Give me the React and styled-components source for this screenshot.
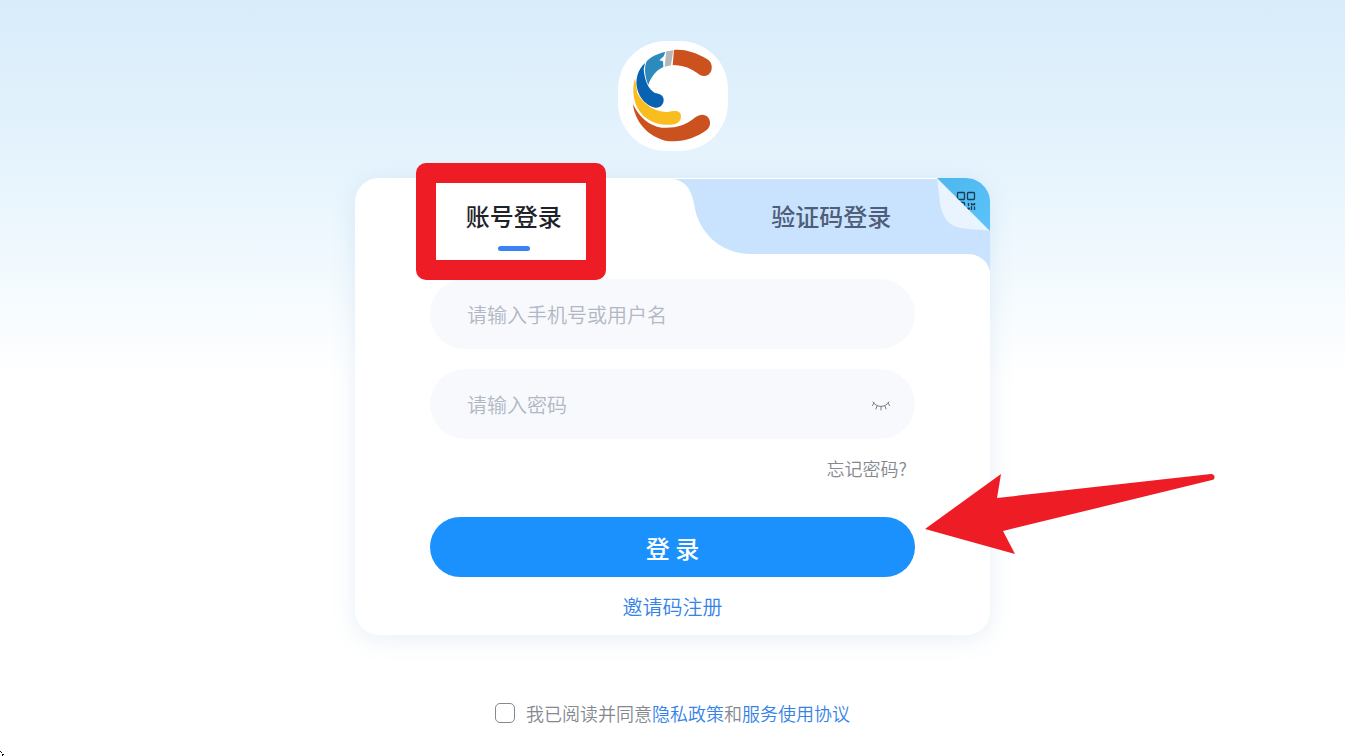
import React, { useState } from 'react';
import styled, { createGlobalStyle, ThemeProvider } from 'styled-components';

const theme = {
  font: "'Noto Sans CJK SC', 'Noto Sans', sans-serif",
  colors: {
    primary: '#1b91fd',
    link: '#3683e8',
    indicator: '#3b82f6',
    text: '#1f2329',
    tabIdle: '#4f5d78',
    muted: '#85898f',
    placeholder: '#b1b7c3',
    field: '#f7f9fd',
    tab: '#c9e3ff',
    mark: '#ee1c25',
  },
};

const GlobalStyle = createGlobalStyle`
  * {
    box-sizing: border-box;
  }

  body {
    margin: 0;
    background: #ffffff;
  }

  button,
  input {
    font-family: inherit;
  }
`;

const Page = styled.div`
  position: relative;
  min-height: 100vh;
  display: flex;
  flex-direction: column;
  align-items: center;
  padding: 41px 16px 28px;
  overflow: hidden;
  font-family: ${({ theme }) => theme.font};
  background: linear-gradient(180deg, #d8ecfa 0, #e6f4fd 170px, #ffffff 380px);
`;

const LogoBox = styled.div`
  width: 110px;
  height: 110px;
  margin-bottom: 27px;
  border-radius: 48px;
  background: #ffffff;

  svg {
    display: block;
  }
`;

const Card = styled.main`
  width: 100%;
  max-width: 635px;
  border-radius: 24px;
  background: #ffffff;
  box-shadow: 0 4px 24px rgba(60, 130, 190, 0.12);
`;

const Tabs = styled.div`
  display: flex;
  height: 76px;
`;

const TabSlot = styled.div`
  position: relative;
  flex: 1;
`;

const Tab = styled.button`
  position: relative;
  display: flex;
  flex-direction: column;
  align-items: center;
  width: 100%;
  height: 100%;
  padding: 20px 0 0;
  border: 0;
  background: none;
  font-size: 24px;
  line-height: 36px;
  font-weight: 500;
  color: ${({ theme, $active }) => ($active ? theme.colors.text : theme.colors.tabIdle)};
  cursor: pointer;

  &::after {
    content: '';
    width: 32px;
    height: 5px;
    margin-top: 12px;
    border-radius: 3px;
    background: ${({ theme, $active }) => ($active ? theme.colors.indicator : 'transparent')};
  }
`;

const TabShape = styled.svg`
  position: absolute;
  top: 0;
  right: 0;
  width: 100%;
  height: 98px;
`;

const QrButton = styled.button`
  position: absolute;
  top: 0;
  right: 0;
  width: 54px;
  height: 54px;
  padding: 0;
  border: 0;
  background: none;
  cursor: pointer;

  svg {
    display: block;
  }
`;

const Highlight = styled.div`
  position: absolute;
  z-index: 2;
  top: -15px;
  left: calc(50% - 98px);
  width: 190px;
  height: 117px;
  border: 20px solid ${({ theme }) => theme.colors.mark};
  border-radius: 10px;
  pointer-events: none;
`;

const Form = styled.form`
  display: flex;
  flex-direction: column;
  padding: 25px 75px 13px;
`;

const Field = styled.div`
  display: flex;
  align-items: center;
  height: 70px;
  margin-bottom: ${({ $last }) => ($last ? '16px' : '20px')};
  padding: 0 24px 0 37px;
  border-radius: 35px;
  background: ${({ theme }) => theme.colors.field};
`;

const Input = styled.input`
  flex: 1;
  min-width: 0;
  height: 40px;
  padding: 0;
  border: 0;
  outline: 0;
  background: transparent;
  font-size: 20px;
  color: ${({ theme }) => theme.colors.text};

  &::placeholder {
    color: ${({ theme }) => theme.colors.placeholder};
    font-weight: 350;
    opacity: 1;
  }
`;

const EyeButton = styled.button`
  display: flex;
  padding: 4px 0 0;
  border: 0;
  background: none;
  cursor: pointer;
`;

const ForgotLink = styled.a`
  align-self: flex-end;
  margin: 0 8px 36px 0;
  font-size: 18px;
  line-height: 26px;
  font-weight: 350;
  color: ${({ theme }) => theme.colors.muted};
  text-decoration: none;
`;

const SubmitRow = styled.div`
  position: relative;
  margin-bottom: 15px;
`;

const SubmitButton = styled.button`
  display: block;
  width: 100%;
  height: 60px;
  padding: 0;
  border: 0;
  border-radius: 30px;
  background: ${({ theme }) => theme.colors.primary};
  color: #ffffff;
  font-size: 24px;
  font-weight: 500;
  cursor: pointer;
`;

const Arrow = styled.svg`
  position: absolute;
  top: -44px;
  left: calc(100% + 10px);
  width: 290px;
  height: 81px;
  pointer-events: none;
`;

const RegisterLink = styled.a`
  align-self: center;
  font-size: 20px;
  line-height: 30px;
  font-weight: 350;
  color: ${({ theme }) => theme.colors.link};
  text-decoration: none;
`;

const Agreement = styled.div`
  display: flex;
  align-items: center;
  gap: 11px;
  margin-top: 65px;
  font-size: 18px;
  line-height: 26px;
  font-weight: 350;
  color: ${({ theme }) => theme.colors.muted};

  a {
    color: ${({ theme }) => theme.colors.link};
    text-decoration: none;
  }
`;

const Checkbox = styled.input`
  appearance: none;
  width: 20px;
  height: 20px;
  margin: 0;
  border: 1px solid #85888e;
  border-radius: 5px;
  background: #ffffff;
  cursor: pointer;

  &:checked {
    border-color: ${({ theme }) => theme.colors.primary};
    background: ${({ theme }) => theme.colors.primary};
  }
`;

const CornerMark = styled.svg`
  position: absolute;
  left: 0;
  bottom: 0;
`;

const Logo = () => (
  <svg width='110' height='110' viewBox='54 33 330 330' aria-hidden='true'>
    <path
      fill='#cb511f'
      d='M222 60C254 57 287 67 322 88C334 96 338 108 334 122C328 137 313 142 300 135C275 116 250 105 218 105Z'
    />
    <path fill='#b5b7b8' d='M199 64L220 61L213 106L194 110Z' />
    <path
      fill='#2c8abd'
      d='M196 66C173 70 152 81 140 94C132 112 134 139 145 165C153 139 171 119 190 111L189 94L178 91L191 79Z'
    />
    <path
      fill='#0961b2'
      d='M135 99C114 118 104 149 112 178C119 207 141 228 165 233C182 235 192 222 191 208C189 195 179 191 165 189C144 178 134 151 131 118Z'
    />
    <path
      fill='#fabd20'
      d='M105 145C94 181 100 226 127 254C154 282 193 289 226 282C241 277 246 263 241 250C233 239 218 244 201 246C165 247 129 222 112 190Z'
    />
    <path
      fill='#cb511f'
      d='M99 223C105 278 146 320 196 332C244 339 285 325 320 300C332 290 333 274 325 263C314 251 300 253 286 262C257 287 225 296 185 293C147 288 119 263 99 223Z'
    />
  </svg>
);

const ClosedEye = () => (
  <svg width='20' height='12' viewBox='0 0 20 12' fill='none' stroke='#777a80' strokeLinecap='round'>
    <path d='M2 2C6 8 14 8 18 2M3 3L1.5 5.5M17 3L18.5 5.5M6 6L5 9M10 7V10M14 6L15 9' />
  </svg>
);

const QrCorner = () => (
  <svg width='54' height='54' viewBox='0 0 54 54' aria-hidden='true'>
    <defs>
      <linearGradient id='fold' x1='0' y1='0' x2='1' y2='1'>
        <stop offset='0' stopColor='#4cb6ed' />
        <stop offset='1' stopColor='#5cc4fa' />
      </linearGradient>
      <clipPath id='foldClip'>
        <path d='M1 0H30C43 0 54 11 54 24V53Z' />
      </clipPath>
    </defs>
    <path fill='#e9f4ff' d='M1 0C3 13 3 24 6 33C9 43 15 48 25 50C34 52 46 51 54 53Z' />
    <g clipPath='url(#foldClip)'>
      <rect width='54' height='54' fill='url(#fold)' />
      <g fill='none' stroke='#183c50' strokeWidth='1.3'>
        <rect x='21.5' y='14.5' width='7' height='7' rx='1' />
        <rect x='31.5' y='14.5' width='7' height='7' rx='1' />
        <rect x='21.5' y='24.5' width='7' height='7' rx='1' />
        <path d='M32.5 25V28M32.5 29.5V32M35.5 25V27M35.5 28V32M38.5 25V27M38.5 28.5V32M31 30.5H34M35 26.5H39' />
      </g>
    </g>
  </svg>
);

const Login = () => {
  const [tab, setTab] = useState('account');
  const [showPassword, setShowPassword] = useState(false);

  const handleSubmit = (e) => {
    e.preventDefault();
  };

  return (
    <Page>
      <LogoBox>
        <Logo />
      </LogoBox>

      <Card>
        <Tabs role='tablist'>
          <TabSlot>
            <Tab type='button' role='tab' aria-selected={tab === 'account'} $active={tab === 'account'} onClick={() => setTab('account')}>
              账号登录
            </Tab>
            <Highlight />
          </TabSlot>
          <TabSlot>
            <TabShape viewBox='0 0 318 98' preserveAspectRatio='none' aria-hidden='true'>
              <path
                fill={theme.colors.tab}
                d='M0 1H294C307 1 318 11 318 24V98C318 85 308 76 295 76H78C53 76 32 61 24 38C20 26 21 4 0 1Z'
              />
            </TabShape>
            <Tab type='button' role='tab' aria-selected={tab === 'code'} $active={tab === 'code'} onClick={() => setTab('code')}>
              验证码登录
            </Tab>
            <QrButton type='button' aria-label='二维码登录'>
              <QrCorner />
            </QrButton>
          </TabSlot>
        </Tabs>

        <Form onSubmit={handleSubmit}>
          <Field>
            <Input type='text' aria-label='手机号或用户名' placeholder='请输入手机号或用户名' />
          </Field>
          <Field $last>
            <Input type={showPassword ? 'text' : 'password'} aria-label='密码' placeholder='请输入密码' />
            <EyeButton type='button' aria-label='显示密码' onClick={() => setShowPassword(!showPassword)}>
              <ClosedEye />
            </EyeButton>
          </Field>
          <ForgotLink href='#forgot'>忘记密码?</ForgotLink>

          <SubmitRow>
            <SubmitButton type='submit'>登 录</SubmitButton>
            <Arrow viewBox='0 0 290 81' aria-hidden='true'>
              <path
                fill={theme.colors.mark}
                d='M0 56L76 1L72 25L286 1C290 1 291 6 287 7L78 58L90 81Z'
              />
            </Arrow>
          </SubmitRow>
          <RegisterLink href='#register'>邀请码注册</RegisterLink>
        </Form>
      </Card>

      <Agreement>
        <Checkbox type='checkbox' id='agree' />
        <span>
          <label htmlFor='agree'>我已阅读并同意</label>
          <a href='#privacy'>隐私政策</a>和<a href='#terms'>服务使用协议</a>
        </span>
      </Agreement>

      <CornerMark width='4' height='5' viewBox='0 0 4 5' aria-hidden='true'>
        <path fill='#111111' d='M0 0H1V1H2V2H1V1H0ZM2 3H4V4H3V5H2Z' />
      </CornerMark>
    </Page>
  );
};

const App = () => (
  <ThemeProvider theme={theme}>
    <GlobalStyle />
    <Login />
  </ThemeProvider>
);

export default App;
